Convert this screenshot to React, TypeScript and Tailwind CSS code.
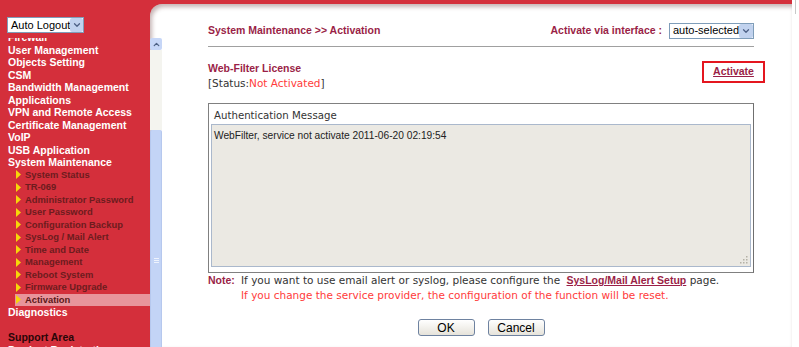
import { ChevronDown, ChevronUp } from "lucide-react";

const TOP_MENU = [
  "Firewall",
  "User Management",
  "Objects Setting",
  "CSM",
  "Bandwidth Management",
  "Applications",
  "VPN and Remote Access",
  "Certificate Management",
  "VoIP",
  "USB Application",
  "System Maintenance",
];

const SUB_MENU = [
  "System Status",
  "TR-069",
  "Administrator Password",
  "User Password",
  "Configuration Backup",
  "SysLog / Mail Alert",
  "Time and Date",
  "Management",
  "Reboot System",
  "Firmware Upgrade",
  "Activation",
];

function Arrow() {
  return (
    <svg width="5" height="9" viewBox="0 0 5 9" className="mr-[4px] shrink-0">
      <polygon points="0,0 5,4.5 0,9" fill="#f6d60a" />
    </svg>
  );
}

function Select({ label, width }: { label: string; width: string }) {
  return (
    <div
      className={`flex h-[16px] ${width} items-center whitespace-nowrap border border-[#7f9db9] bg-white pl-[3px] text-[11px] leading-none text-black [font-family:'Liberation_Sans',sans-serif]`}
    >
      <span className="flex-1">{label}</span>
      <span className="flex h-[14px] w-[14px] items-center justify-center rounded-[2px] bg-[#c1d2ee]">
        <ChevronDown size={10} strokeWidth={3} className="text-[#4d6185]" />
      </span>
    </div>
  );
}

function Sidebar() {
  return (
    <div className="flex w-[150px] shrink-0 flex-col bg-[#d42f3b]">
      <div className="h-[38px] pl-[7px] pt-[17px]">
        <Select label="Auto Logout" width="w-[77px]" />
      </div>
      <div className="flex-1 overflow-hidden">
        <ul className="-mt-[7px] text-[10.5px] font-bold leading-[12.5px] [font-family:'Liberation_Sans',sans-serif]">
          {TOP_MENU.map((item) => (
            <li key={item} className="pl-[8px] text-white">
              {item}
            </li>
          ))}
          {SUB_MENU.map((item) => (
            <li key={item} className="pl-[15px]">
              <div
                className={
                  item === "Activation"
                    ? "flex items-center bg-[#e8949b] pl-[1px] text-[#5a1718]"
                    : "flex items-center pl-[1px] text-[#6d1c1e]"
                }
              >
                <Arrow />
                <span className="text-[9.4px]">{item}</span>
              </div>
            </li>
          ))}
          <li className="pl-[8px] text-white">Diagnostics</li>
          <li className="h-[12.5px]" />
          <li className="pl-[8px] text-[#2a0608]">Support Area</li>
          <li className="pl-[8px] text-white">Product Registration</li>
        </ul>
      </div>
    </div>
  );
}

function Scrollbar() {
  return (
    <div className="mt-[34px] flex w-[12px] shrink-0 flex-col">
      <div className="flex h-[12px] items-center justify-center rounded-[2px] bg-[#c6d6f7]">
        <ChevronUp size={9} strokeWidth={3.5} className="text-[#4d6185]" />
      </div>
      <div className="h-[80px] bg-[#f4f4ef]" />
      <div className="flex flex-1 flex-col items-center rounded-t-[2px] border-x border-[#b6c8ee] bg-[#c3d4f6] pt-[128px]">
        <div className="h-px w-[5px] bg-[#eef3fd]" />
        <div className="mt-[1px] h-px w-[5px] bg-[#eef3fd]" />
        <div className="mt-[1px] h-px w-[5px] bg-[#eef3fd]" />
      </div>
    </div>
  );
}

function Content() {
  return (
    <div className="ml-[46px] w-[546px] pt-[17px] text-[10.5px] text-[#333] [font-family:'DejaVu_Sans',sans-serif]">
      <div className="flex h-[26px] items-center justify-between border-b border-[#a0a0a0] pb-[6px] [font-family:'Liberation_Sans',sans-serif]">
        <span className="text-[10.5px] font-bold text-[#9a1f47]">System Maintenance &gt;&gt; Activation</span>
        <div className="flex items-center gap-[7px]">
          <span className="text-[10.5px] font-bold text-[#9a1f47]">Activate via interface :</span>
          <Select label="auto-selected" width="w-[85px]" />
        </div>
      </div>

      <div className="mt-[14px] flex items-start justify-between">
        <div>
          <div className="text-[10.5px] font-bold leading-[14px] text-[#9a1f47] [font-family:'Liberation_Sans',sans-serif]">
            Web-Filter License
          </div>
          <div className="mt-[1px] leading-[14px]">
            [Status:<span className="text-[#ff3b3b]">Not Activated</span>]
          </div>
        </div>
        <div className="-mr-[11px] flex h-[22px] w-[63px] items-center justify-center border-2 border-[#e4161f]">
          <a href="#" className="text-[10.5px] font-bold text-[#9a1f47] underline [font-family:'Liberation_Sans',sans-serif]">
            Activate
          </a>
        </div>
      </div>

      <div className="mt-[13px] h-[170px] border border-[#808080] border-r-[#6f6f6f] px-[2px] pt-[3px]">
        <div className="pl-[3px] text-[10.2px] leading-[17px] text-[#333]">Authentication Message</div>
        <div className="relative h-[143px] border border-[#aab8cc] bg-[#ebe9e3] px-[2px] pt-[4px] text-[10.2px] leading-[14px] text-[#222] [font-family:'Liberation_Sans',sans-serif]">
          WebFilter, service not activate 2011-06-20 02:19:54
          <svg width="8" height="8" viewBox="0 0 8 8" className="absolute bottom-[2px] right-[2px]">
            <rect x="6" y="0" width="1.5" height="1.5" fill="#b4b1a6" />
            <rect x="3" y="3" width="1.5" height="1.5" fill="#b4b1a6" />
            <rect x="6" y="3" width="1.5" height="1.5" fill="#b4b1a6" />
            <rect x="0" y="6" width="1.5" height="1.5" fill="#b4b1a6" />
            <rect x="3" y="6" width="1.5" height="1.5" fill="#b4b1a6" />
            <rect x="6" y="6" width="1.5" height="1.5" fill="#b4b1a6" />
          </svg>
        </div>
      </div>

      <div className="flex leading-[15px]">
        <span className="w-[33px] font-bold text-[#9a1f47] [font-family:'Liberation_Sans',sans-serif]">Note:</span>
        <div>
          <div>
            If you want to use email alert or syslog, please configure the{" "}
            <a href="#" className="ml-[3px] font-bold text-[#9a1f47] underline [font-family:'Liberation_Sans',sans-serif]">
              SysLog/Mail Alert Setup
            </a>{" "}
            page.
          </div>
          <div className="text-[#ff3b3b]">
            If you change the service provider, the configuration of the function will be reset.
          </div>
        </div>
      </div>

      <div className="mt-[16px] flex justify-center gap-[13px] [font-family:'Liberation_Sans',sans-serif]">
        <button className="h-[17px] w-[57px] rounded-[3px] border border-[#6e82a0] bg-gradient-to-b from-white to-[#e6e3da] text-[12px] leading-none text-black">
          OK
        </button>
        <button className="h-[17px] w-[57px] rounded-[3px] border border-[#6e82a0] bg-gradient-to-b from-white to-[#e6e3da] text-[12px] leading-none text-black">
          Cancel
        </button>
      </div>
    </div>
  );
}

export default function App() {
  return (
    <div className="flex h-[347px] w-[799px] overflow-hidden bg-white">
      <div className="flex w-[792px] bg-[#d42f3b]">
        <Sidebar />
        <div className="mt-[4px] flex flex-1 rounded-tl-[12px] bg-white shadow-[inset_2px_3px_4px_rgba(90,40,40,0.35)]">
          <Scrollbar />
          <Content />
        </div>
      </div>
      <div className="ml-[3px] h-[14px] w-px bg-[#c8c8c8]" />
    </div>
  );
}
